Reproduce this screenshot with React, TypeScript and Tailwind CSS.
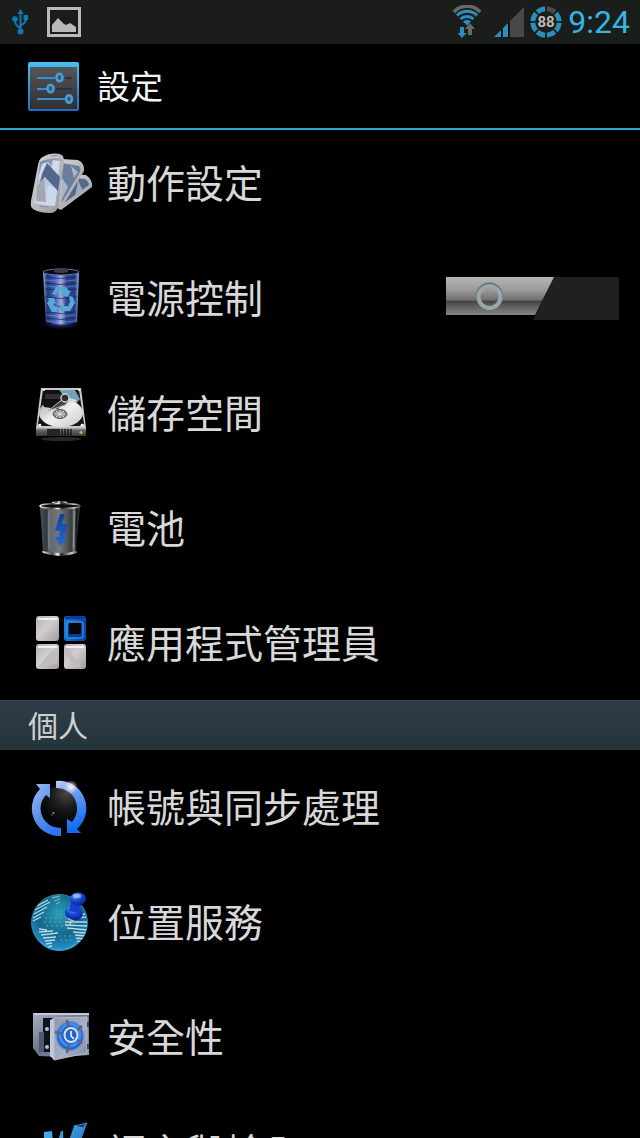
import { ReactNode, useState } from 'react';

const UsbIcon = () => (
  <svg className="h-7 w-5" viewBox="0 0 20 28" fill="none" stroke="#0f78b8" strokeWidth="2">
    <path d="M9.500 5v18M9.500 20C4 17 4 15 4 11M9.500 17c5-1 5.500-4 5.500-7" />
    <path d="M9.500 1l3 5h-6z" fill="#0f78b8" stroke="none" />
    <circle cx="9.500" cy="23.500" r="3" fill="#0f78b8" stroke="none" />
    <circle cx="4" cy="11" r="2.800" fill="#0f78b8" stroke="none" />
    <path d="M12.500 7H17v5h-4.500z" fill="#0f78b8" stroke="none" />
  </svg>
);

const PictureIcon = () => (
  <svg className="h-[30px] w-[34px]" viewBox="0 0 34 30">
    <rect x="1.500" y="1.500" width="31" height="27" fill="none" stroke="#b9bab8" strokeWidth="3" />
    <path d="M5 25v-7l6-7 6 6 2 1 4-2 6 4v5z" fill="#b9bab8" />
  </svg>
);

const WifiIcon = () => (
  <svg className="h-[34px] w-[30px]" viewBox="0 0 30 34" fill="none">
    <path d="M1.800 7A18 18 0 0 1 28.200 7" stroke="#686868" strokeWidth="3.500" />
    <path d="M5 10.500A14 14 0 0 1 25 10.500M8.500 14A9.500 9.500 0 0 1 21.500 14" stroke="#2a8fbd" strokeWidth="3" />
    <path d="M11 16.500q4-2.800 8 0l-4 4z" fill="#2a8fbd" />
    <path d="M8 22h4v6h2.500L10 33l-4.500-5H8z" fill="#2a8fbd" />
    <path d="M16 30v-6h-3l5-6 5 6h-3v6z" fill="#686868" />
  </svg>
);

const SignalIcon = () => (
  <svg className="h-[30px] w-[30px]" viewBox="0 0 30 30">
    <path d="M30 0v30H15.500V14.500z" fill="#484848" />
    <path d="M0 30l7-7v7zM8.500 21.500l5.500-5.500v14H8.500z" fill="#2a8fbd" />
    <path d="M7.800 22.200v7.800M14.800 15v15" stroke="#000" strokeWidth="1.500" />
  </svg>
);

const BatteryRing = () => (
  <svg className="h-8 w-8" viewBox="0 0 32 32">
    {[0, 1, 2, 3, 4, 5, 6, 7].map((n) => (
      <path
        key={n}
        d="M16.900 2.800A13.400 13.400 0 0 1 24.700 6"
        transform={`rotate(${n * 45} 16 16)`}
        fill="none"
        stroke={n === 0 ? '#4a4a4a' : '#2a8fbd'}
        strokeWidth="5"
      />
    ))}
    <text x="16" y="21" textAnchor="middle" fontSize="15" fontWeight="700" fontFamily="Roboto, sans-serif" fill="#bcbcbc">
      88
    </text>
  </svg>
);

const SlidersIcon = () => (
  <svg className="h-[50px] w-[51px]" viewBox="0 0 51 50">
    <defs>
      <linearGradient id="sl-frame" x2="0" y2="1">
        <stop offset="0" stopColor="#45c0f5" />
        <stop offset="1" stopColor="#1c6dc4" />
      </linearGradient>
      <linearGradient id="sl-body" x2="0" y2="1">
        <stop offset="0" stopColor="#565656" />
        <stop offset="1" stopColor="#303030" />
      </linearGradient>
    </defs>
    <rect y="1" width="51" height="49" rx="2" fill="url(#sl-frame)" />
    <rect x="2" y="6" width="47" height="42" fill="url(#sl-body)" />
    <path d="M37 17h7M28 28h16" stroke="#16314a" strokeWidth="1.500" />
    <path d="M9 17h18M9 28h10M9 38h28" stroke="#318ed2" strokeWidth="2" />
    <g fill="#4a535a" stroke="#3da2e6" strokeWidth="2.500">
      <ellipse cx="31.500" cy="16.500" rx="3" ry="3.700" />
      <ellipse cx="22.500" cy="27.500" rx="3" ry="3.700" />
      <ellipse cx="41" cy="38" rx="3" ry="3.700" />
    </g>
  </svg>
);

const MotionIcon = () => (
  <svg className="size-16" viewBox="0 0 64 64">
    <defs>
      <linearGradient id="mo-case" x2="1" y2="1">
        <stop offset="0" stopColor="#dcdce2" />
        <stop offset="1" stopColor="#96969e" />
      </linearGradient>
      <linearGradient id="mo-screen" x2="0.300" y2="1">
        <stop offset="0" stopColor="#67799c" />
        <stop offset="0.500" stopColor="#b7c0d5" />
        <stop offset="1" stopColor="#d3d9e6" />
      </linearGradient>
    </defs>
    <path d="M45 23l13 1q7 5 6 12L33 59l-8-4z" fill="url(#mo-case)" />
    <path d="M46 27l11 1q4 3 4 6L36 52z" fill="#586985" />
    <path d="M50 29l5 11-8 6z" fill="#9eabc1" />
    <path d="M34 8l16 1q7 3 6 11L34 56l-10 2z" fill="url(#mo-case)" />
    <path d="M34 12l17 3q2 2 1 6L34 51z" fill="#6b7e9d" />
    <path d="M34 27l6 9-6 12zM43 15l7 6-4 6z" fill="#a9b6cc" />
    <path d="M13 7Q24 0 34 4q2 2 2 7l-6 45q-2 6-8 6-11 0-17-4-3-2-2-8l7-36q1-5 3-7z" fill="url(#mo-case)" />
    <path d="M12 11q9-5 21-3l-6 47q-11 0-21-3z" fill="url(#mo-screen)" />
    <path d="M14 13l6-2 4 8-10 11-4-2zM25 9l7 1-2 15-8-2z" fill="#d5d8e6" />
    <path d="M19 12l13 14-2 14-13-14-5 5 2-8z" fill="#52678d" />
    <path d="M9 35l7-8 2 24-10-1z" fill="#a3a7b5" />
    <path d="M20 34l9 5-2 14-9-1z" fill="#c8d9ed" />
    <path d="M23 5l6-.5M12 55l8 1" stroke="#8c8c95" strokeWidth="1.200" />
  </svg>
);

const PowerIcon = () => (
  <svg className="size-16" viewBox="0 0 64 64">
    <defs>
      <linearGradient id="pw-can">
        <stop offset="0" stopColor="#8eaee8" />
        <stop offset="0.120" stopColor="#243879" />
        <stop offset="0.350" stopColor="#4767c6" />
        <stop offset="0.500" stopColor="#a5aed3" />
        <stop offset="0.650" stopColor="#2f4493" />
        <stop offset="0.880" stopColor="#273d85" />
        <stop offset="1" stopColor="#91b5f2" />
      </linearGradient>
      <radialGradient id="pw-glow">
        <stop offset="0" stopColor="#3c67d8" />
        <stop offset="1" stopColor="#0a1438" stopOpacity="0" />
      </radialGradient>
    </defs>
    <ellipse cx="33" cy="57" rx="21" ry="7" fill="url(#pw-glow)" />
    <path d="M15 6h36l-2 50q-16 5-31 0z" fill="url(#pw-can)" />
    <g fill="none" stroke="#101d55" strokeWidth="1" opacity="0.650">
      <path d="M17 11q16 3 32 0M17 17q16 3 32 0M17 23q16 3 32 0M17 31q16 3 32 0M18 39q15 3 30 0M18 46q15 3 30 0M18 52q15 3 30 0" />
    </g>
    <g fill="none" stroke="#9faee5" strokeWidth="1" opacity="0.400">
      <path d="M18 14q15 3 30 0M18 20q15 3 30 0M19 49q14 3 28 0M19 55q14 3 28 0" />
    </g>
    <ellipse cx="33" cy="6" rx="18" ry="3" fill="#080a14" stroke="#5a74b4" />
    <path d="M26 3q7-2 14 0v3q-7 2-14 0z" fill="#3c3c41" />
    <g fill="#53abd3">
      <path d="M24 28l4-7h10l3 4 2-1-3 7-7-2 2-1-2-3h-3l-2 4z" />
      <path d="M41 30l4 1 2 6-5 8h-6v3l-5-6 5-5v3h4l2-4z" />
      <path d="M29 46h-5l-5-9 2-3-2-2h7l2 6-2-1-1 2 5 2z" />
    </g>
  </svg>
);

const StorageIcon = () => (
  <svg className="size-16" viewBox="0 0 64 64">
    <defs>
      <linearGradient id="st-plate" x2="1" y2="1">
        <stop offset="0" stopColor="#a3a3a3" />
        <stop offset="0.500" stopColor="#f1f1f1" />
        <stop offset="1" stopColor="#c6c6c6" />
      </linearGradient>
      <linearGradient id="st-front" x2="0" y2="1">
        <stop offset="0" stopColor="#b1b1b1" />
        <stop offset="0.300" stopColor="#666" />
        <stop offset="1" stopColor="#383838" />
      </linearGradient>
    </defs>
    <ellipse cx="33" cy="58" rx="20" ry="2" fill="#292929" />
    <path d="M13 7h40l5 40H8z" fill="#c9c9c9" />
    <path d="M15 9h36l5 34-5 2H13l-3-2z" fill="#151515" />
    <path d="M31 9h16l5 9-5 6-12-3z" fill="#6ea4b5" />
    <ellipse cx="33" cy="32" rx="22" ry="14" fill="url(#st-plate)" />
    <path d="M14 20l2-10 15-1 8 10-9 9-14-2z" fill="#111" />
    <rect x="17" y="13" width="16" height="5" rx="1" fill="#303030" />
    <ellipse cx="32" cy="33" rx="7" ry="4.500" fill="#898989" stroke="#555" />
    <path d="M27 33h10M32 29v8M28 30l8 6M36 30l-8 6" stroke="#dedede" strokeWidth="1" />
    <path d="M20 30l16-13 5 3-4 4z" fill="#444" stroke="#bbb" strokeWidth="1" />
    <circle cx="37" cy="17" r="4" fill="#303030" stroke="#ccc" strokeWidth="1.500" />
    <path d="M41 18l7 2" stroke="#ddd" strokeWidth="2" />
    <g fill="#fff">
      <circle cx="16" cy="9" r="1" />
      <circle cx="51" cy="9" r="1" />
      <circle cx="12" cy="44" r="1.300" />
      <circle cx="54" cy="44" r="1.300" />
    </g>
    <path d="M8 47h50v8H8z" fill="url(#st-front)" />
    <path d="M19 48h13v7H19z" fill="#252525" />
    <path d="M34 48v7M37 48v7M40 48v7M43 48v7" stroke="#171717" strokeWidth="1.500" />
    <circle cx="53" cy="51.500" r="1.600" fill="#77db3b" />
  </svg>
);

const BatteryIcon = () => (
  <svg className="size-16" viewBox="0 0 64 64">
    <defs>
      <linearGradient id="ba-can">
        <stop offset="0" stopColor="#43525d" />
        <stop offset="0.170" stopColor="#30393f" />
        <stop offset="0.220" stopColor="#5f666a" />
        <stop offset="0.500" stopColor="#74787b" />
        <stop offset="0.800" stopColor="#353c40" />
        <stop offset="0.850" stopColor="#888" />
        <stop offset="0.900" stopColor="#151515" />
        <stop offset="1" stopColor="#3a3a3a" />
      </linearGradient>
      <linearGradient id="ba-rim">
        <stop offset="0" stopColor="#f5f5f5" />
        <stop offset="0.300" stopColor="#444" />
        <stop offset="0.450" stopColor="#fff" />
        <stop offset="0.550" stopColor="#222" />
        <stop offset="0.850" stopColor="#ccc" />
        <stop offset="1" stopColor="#555" />
      </linearGradient>
      <linearGradient id="ba-bolt" x2="0" y2="1">
        <stop offset="0" stopColor="#12409c" />
        <stop offset="1" stopColor="#2a67d2" />
      </linearGradient>
    </defs>
    <path d="M12 11h40l-4 45q-16 5-33 0z" fill="url(#ba-can)" />
    <path d="M14 55q18 4 35 0v2q-17 6-34 0z" fill="url(#ba-rim)" />
    <path d="M24 6q8-2 16 0v3H24z" fill="url(#ba-rim)" />
    <ellipse cx="32" cy="10" rx="20" ry="2.500" fill="#0c0c0c" stroke="url(#ba-rim)" strokeWidth="1.500" />
    <path d="M32 18h5l-3 10h6l-4 13 3 1-7 8-5-9h4l1-6h-5z" fill="url(#ba-bolt)" />
    <path d="M21 15v38M47 15l-2 37" stroke="#b5bcc0" strokeWidth="1" opacity="0.500" />
  </svg>
);

const AppsIcon = () => (
  <svg className="size-16" viewBox="0 0 64 64">
    <defs>
      <linearGradient id="ap-tile" x2="1" y2="1">
        <stop offset="0" stopColor="#b3afb2" />
        <stop offset="0.450" stopColor="#d2ced0" />
        <stop offset="1" stopColor="#a09b9e" />
      </linearGradient>
      <linearGradient id="ap-blue" x2="1" y2="0.300">
        <stop offset="0" stopColor="#1784ef" />
        <stop offset="1" stopColor="#0548a8" />
      </linearGradient>
    </defs>
    <g fill="url(#ap-tile)">
      <rect x="8" y="5" width="23" height="25" rx="3" />
      <rect x="8" y="33" width="23" height="25" rx="3" />
      <rect x="36" y="33" width="22" height="25" rx="3" />
    </g>
    <path d="M10 57l12-16 8-3v14zM38 36l16 20h-7l-10-14z" fill="#c0bbbe" />
    <path d="M10 8h19M10 36h19M38 36h18" stroke="#f4f0f2" strokeWidth="2" />
    <rect x="36" y="5" width="22" height="25" rx="3" fill="url(#ap-blue)" />
    <path d="M37 7q10-1 20 0" fill="none" stroke="#0c3b98" strokeWidth="3" />
    <rect x="39" y="11" width="16" height="16" rx="2" fill="#0a3c94" stroke="#4aa9f5" strokeWidth="1" />
    <rect x="41" y="12" width="12" height="11" rx="1" fill="#06060a" />
  </svg>
);

const SyncIcon = () => (
  <svg className="size-16" viewBox="0 0 64 64">
    <defs>
      <linearGradient id="sy-left" x2="0.600" y2="1">
        <stop offset="0" stopColor="#9cbaf3" />
        <stop offset="0.500" stopColor="#6694ec" />
        <stop offset="1" stopColor="#2a76f3" />
      </linearGradient>
      <linearGradient id="sy-right" x2="0.300" y2="1">
        <stop offset="0" stopColor="#b9cff8" />
        <stop offset="0.300" stopColor="#7ba4ef" />
        <stop offset="1" stopColor="#136bf5" />
      </linearGradient>
      <radialGradient id="sy-core" cx="0.700" cy="0.150" r="0.700">
        <stop offset="0" stopColor="#4a4744" />
        <stop offset="0.500" stopColor="#171b1c" />
        <stop offset="1" stopColor="#050607" />
      </radialGradient>
      <radialGradient id="sy-flare">
        <stop offset="0" stopColor="#fff6f0" />
        <stop offset="1" stopColor="#fff6f0" stopOpacity="0" />
      </radialGradient>
    </defs>
    <circle cx="30" cy="33" r="21" fill="url(#sy-core)" />
    <path d="M8 9h14v14l-4-3A19.500 19.500 0 0 0 33 53v8A27.500 27.500 0 0 1 12 14z" fill="url(#sy-left)" />
    <path d="M28 6A27.500 27.500 0 0 1 49 54l4 4H39V44l5 3A20.500 20.500 0 0 0 28 13z" fill="url(#sy-right)" />
    <circle cx="43" cy="12" r="7" fill="url(#sy-flare)" />
    <circle cx="25.500" cy="38" r="1" fill="#48c0a0" />
    <circle cx="24" cy="40" r="0.800" fill="#d8463b" />
  </svg>
);

const LocationIcon = () => (
  <svg className="size-16" viewBox="0 0 64 64">
    <defs>
      <radialGradient id="lo-sea" cx="0.500" cy="0.350" r="0.650">
        <stop offset="0" stopColor="#2e9db4" />
        <stop offset="0.600" stopColor="#12678c" />
        <stop offset="1" stopColor="#2c93cc" />
      </radialGradient>
      <radialGradient id="lo-pin" cx="0.350" cy="0.250" r="0.800">
        <stop offset="0" stopColor="#78a5ff" />
        <stop offset="0.500" stopColor="#1847d8" />
        <stop offset="1" stopColor="#071f87" />
      </radialGradient>
      <clipPath id="lo-clip">
        <circle cx="31.500" cy="32.500" r="28" />
      </clipPath>
    </defs>
    <circle cx="31.500" cy="32.500" r="28" fill="url(#lo-sea)" stroke="#2e82aa" />
    <g clipPath="url(#lo-clip)" fill="none" stroke="#b8d9e5" strokeWidth="1.300">
      <path d="M9 16l11-6M7 20l15-8M6 24l13-7M5 28l11-6M5 31l8-4" />
      <path d="M24 8l8-2M26 11l6-2M28 14l4-2" opacity="0.600" />
      <path d="M11 39l8 1M11 42l14-1M13 45l17-2M15 48l13-1M17 51l10-1M18 54l6-1M20 57l4-1" />
      <path d="M37 32l22 0M37 35l22 1M39 38l20 2M45 42l13 1M47 45l11 1M48 48l8 1M49 51l5 1M40 29l18-2M46 26l11-2" />
      <path d="M17 28h25M16 32h19M18 36h18M27 21h13M32 50h14M31 46h13" stroke="#3cabc6" strokeWidth="1" strokeDasharray="2 3" />
    </g>
    <path d="M10 49q21 20 43 0-8 12-22 12T10 49z" fill="#43afe6" opacity="0.600" />
    <path d="M41 34l2-5 3 1-4 5z" fill="#c2b7b6" />
    <ellipse cx="46" cy="23" rx="9" ry="7" transform="rotate(15 46 23)" fill="url(#lo-pin)" />
    <path d="M43 12l10 3-2 8-10-2z" fill="#173dcc" />
    <ellipse cx="50" cy="9" rx="8" ry="6.500" fill="url(#lo-pin)" />
    <ellipse cx="49" cy="6" rx="4" ry="2" fill="#a9c6ff" opacity="0.700" />
  </svg>
);

const SecurityIcon = () => (
  <svg className="size-16" viewBox="0 0 64 64">
    <defs>
      <linearGradient id="se-body" x2="1" y2="1">
        <stop offset="0" stopColor="#aab0c3" />
        <stop offset="0.500" stopColor="#6b738b" />
        <stop offset="1" stopColor="#8f97ad" />
      </linearGradient>
      <linearGradient id="se-door" x2="1" y2="1">
        <stop offset="0" stopColor="#8f98b0" />
        <stop offset="0.600" stopColor="#a9b1c6" />
        <stop offset="1" stopColor="#7a839d" />
      </linearGradient>
    </defs>
    <path d="M5 8h56v42l-26 2-24-1-6-8z" fill="url(#se-body)" />
    <path d="M5 8h56v2H7z" fill="#c5cadb" />
    <path d="M15 13h12v34H15z" fill="#0d1120" />
    <path d="M11 27h5v20h-5z" fill="#4f5870" />
    <path d="M22 15l4-2v42l-4-4z" fill="#c3c8d8" />
    <path d="M26 13l33-1v36l-33 7z" fill="url(#se-door)" stroke="#b6bccd" strokeWidth="1" />
    <g fill="#b9bed0">
      <circle cx="19" cy="24" r="2" />
      <circle cx="19" cy="42" r="2" />
    </g>
    <path d="M59 17h2v5h-2zM59 39h2v5h-2z" fill="#3c445a" />
    <ellipse cx="42" cy="31" rx="13.500" ry="14.500" fill="#1762cd" stroke="#798cba" strokeWidth="1.500" />
    <ellipse cx="42" cy="30" rx="10" ry="11" fill="none" stroke="#3d8def" strokeWidth="3" />
    <path d="M42 31L39 15M42 31l12-10M42 31l12 7M42 31l-3 17M42 31l-15-4" stroke="#5a6380" strokeWidth="2.500" />
    <ellipse cx="43" cy="30" rx="7.500" ry="8" fill="#d5dff2" />
    <ellipse cx="43" cy="30" rx="5.500" ry="6" fill="#2366cb" />
    <path d="M43 26v5l3 3" fill="none" stroke="#fff" strokeWidth="1.500" />
  </svg>
);

const LanguageIcon = () => (
  <svg className="size-16" viewBox="0 0 64 64">
    <defs>
      <linearGradient id="la-w" x2="1" y2="1">
        <stop offset="0" stopColor="#4ab8ee" />
        <stop offset="1" stopColor="#1d5db0" />
      </linearGradient>
    </defs>
    <path d="M16 12l8-1 2 24 7-24h2l1 24 10-29 13-3-18 53h-8l-2-24-7 24h-8z" fill="url(#la-w)" />
    <path d="M46 6l13-3-4 5z" fill="#15407e" stroke="#69c8f2" strokeWidth="0.500" />
  </svg>
);

type Item = { title: string; icon: ReactNode; toggle?: boolean };

const deviceItems: Item[] = [
  { title: '動作設定', icon: <MotionIcon /> },
  { title: '電源控制', icon: <PowerIcon />, toggle: true },
  { title: '儲存空間', icon: <StorageIcon /> },
  { title: '電池', icon: <BatteryIcon /> },
  { title: '應用程式管理員', icon: <AppsIcon /> }
];

const personalItems: Item[] = [
  { title: '帳號與同步處理', icon: <SyncIcon /> },
  { title: '位置服務', icon: <LocationIcon /> },
  { title: '安全性', icon: <SecurityIcon /> },
  { title: '語言與輸入', icon: <LanguageIcon /> }
];

const Toggle = ({ label }: { label: string }) => {
  const [on, setOn] = useState(false);

  return (
    <label className="relative block h-[43px] w-[173px] shrink-0 cursor-pointer">
      <input
        type="checkbox"
        aria-label={label}
        checked={on}
        onChange={(e) => setOn(e.target.checked)}
        className="absolute inset-0 size-full cursor-pointer opacity-0"
      />
      <svg className={on ? 'size-full -scale-x-100' : 'size-full'} viewBox="0 0 173 43">
        <defs>
          <linearGradient id="tg-metal" x2="0" y2="1">
            <stop offset="0" stopColor="#b5b5b5" />
            <stop offset="0.350" stopColor="#999" />
            <stop offset="0.600" stopColor="#707070" />
            <stop offset="0.640" stopColor="#454545" />
            <stop offset="0.850" stopColor="#6c6c6c" />
            <stop offset="1" stopColor="#858585" />
          </linearGradient>
        </defs>
        <path d="M108 0h65v43H87z" fill="#202020" />
        <path d="M0 0h108L89 38H0z" fill="url(#tg-metal)" />
        <circle cx="43.500" cy="19" r="12" fill="none" stroke="#666d70" strokeWidth="3" />
        <circle cx="43.500" cy="20" r="11" fill="none" stroke="#9ba6aa" strokeWidth="4" />
      </svg>
    </label>
  );
};

const SettingsList = ({ items }: { items: Item[] }) => (
  <ul className="divide-y divide-black">
    {items.map(({ title, icon, toggle }) => (
      <li key={title} className="flex h-[115px] items-center pr-[21px] pl-7 last:h-[114px]">
        <a href="#" className="flex min-w-0 flex-1 items-center gap-[15px] text-[39px] leading-[56px] text-[#d8d8d8]">
          {icon}
          <span className="pb-1 whitespace-nowrap">{title}</span>
        </a>
        {toggle ? <Toggle label={title} /> : null}
      </li>
    ))}
  </ul>
);

const StatusBar = () => (
  <div className="flex h-11 shrink-0 items-center justify-between bg-[#1b1d1a] pr-[10px] pl-[11px]">
    <div className="flex items-center gap-4">
      <UsbIcon />
      <PictureIcon />
    </div>
    <div className="flex items-center">
      <div className="flex items-center gap-3 pr-[6px]">
        <WifiIcon />
        <SignalIcon />
      </div>
      <BatteryRing />
      <time className="pl-[6px] font-[Roboto,sans-serif] text-[32px] leading-[44px] text-[#33b5e5]">9:24</time>
    </div>
  </div>
);

export default function App() {
  return (
    <div className="flex h-screen flex-col overflow-hidden bg-black font-['Noto_Sans_CJK_TC',sans-serif]">
      <StatusBar />
      <header className="flex h-[86px] shrink-0 items-center gap-[18px] border-b-2 border-[#2ba6d6] pl-7">
        <SlidersIcon />
        <h1 className="pb-0.5 text-[33px] leading-[48px] text-[#f3f3f3]">設定</h1>
      </header>
      <main className="-mt-1 min-h-0 flex-1 overflow-hidden">
        <SettingsList items={deviceItems} />
        <h2 className="h-[50px] border-t border-[#3d4a53] bg-linear-to-b from-[#2f3c47] to-[#23343b] pl-7 text-[30px] leading-[46px] text-[#d0d0d0]">
          個人
        </h2>
        <SettingsList items={personalItems} />
      </main>
    </div>
  );
}
